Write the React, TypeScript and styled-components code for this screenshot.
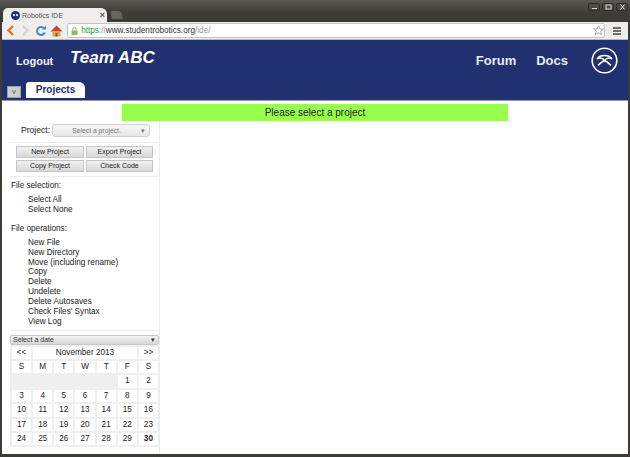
import styled, { createGlobalStyle } from "styled-components";

const GlobalStyle = createGlobalStyle`
  html, body { margin: 0; padding: 0; height: 100%; overflow: hidden; background: #fff; }
  body { font-family: "Liberation Sans", Arial, sans-serif; }
`;

const Window = styled.div`
  width: 630px;
  height: 457px;
  box-sizing: border-box;
  display: flex;
  flex-direction: column;
  background: #3c3b37;
  padding: 0 2px 3px;
  overflow: hidden;
`;

const TitleBar = styled.div`
  height: 22px;
  flex: none;
  display: flex;
  align-items: flex-end;
  padding-left: 3px;
  background: linear-gradient(#5a5852, #3c3b37 60%);
  margin: 0 -2px;
`;

const Tab = styled.div`
  width: 104px;
  height: 14px;
  box-sizing: border-box;
  background: #efeeec;
  border-radius: 5px 6px 0 0;
  display: flex;
  align-items: center;
  padding: 0 2px 0 8px;
  gap: 2px;
  font-size: 7px;
  color: #555;
`;

const TabLabel = styled.span`
  flex: 1;
  white-space: nowrap;
`;

const TabClose = styled.span`
  font-size: 9px;
  font-weight: 700;
  color: #555;
`;

const NewTab = styled.div`
  width: 11px;
  height: 8px;
  margin: 0 0 3px 4px;
  background: #66655f;
  border-radius: 2px 3px 0 0;
  transform: skewX(12deg);
`;

const WindowButtons = styled.div`
  margin: 0 2px auto auto;
  padding-top: 3px;
  display: flex;
  gap: 2px;
`;

const WindowButton = styled.div`
  width: 10px;
  height: 6px;
  border: 1px solid #2e2d2a;
  border-radius: 2px;
  background: #4c4b46;
  color: #d8d6d0;
  display: flex;
  align-items: center;
  justify-content: center;
  svg { display: block; }
`;

const Toolbar = styled.div`
  height: 18px;
  flex: none;
  box-sizing: border-box;
  display: flex;
  align-items: center;
  background: #efeeec;
  border-bottom: 1px solid #b8b8b6;
  padding: 0 3px 0 1px;
`;

const NavIcon = styled.div`
  width: 15.3px;
  height: 14px;
  flex: none;
  display: flex;
  align-items: center;
  justify-content: center;
`;

const Omnibox = styled.div`
  flex: 1;
  height: 15px;
  box-sizing: border-box;
  margin-left: 3px;
  background: #fff;
  border: 1px solid #c4c4c2;
  border-radius: 2px;
  display: flex;
  align-items: center;
  padding: 0 0 0 3px;
  font-size: 8.2px;
  white-space: nowrap;
`;

const Https = styled.span`
  color: #1f9c32;
  margin-left: 3px;
`;

const UrlDim = styled.span`
  color: #9a9a9a;
`;

const UrlHost = styled.span`
  color: #333;
`;

const StarSlot = styled.div`
  margin-left: auto;
  display: flex;
`;

const MenuSlot = styled.div`
  width: 17px;
  margin-left: 3px;
  display: flex;
  justify-content: center;
`;

const Page = styled.div`
  flex: 1;
  min-height: 0;
  background: #fff;
  display: flex;
  flex-direction: column;
`;

const Header = styled.header`
  height: 61px;
  flex: none;
  box-sizing: border-box;
  background: #21316f;
  border-bottom: 1px solid #8e97b8;
  display: flex;
  flex-direction: column;
`;

const HeaderTop = styled.div`
  height: 41px;
  display: flex;
  align-items: center;
  padding: 0 10px 0 14px;
  color: #fff;
`;

const Logout = styled.span`
  font-size: 11px;
  font-weight: 700;
  width: 54px;
  color: #f4f5fa;
`;

const TeamName = styled.span`
  font-size: 17px;
  font-weight: 700;
  font-style: italic;
  margin-top: -5px;
`;

const HeaderLink = styled.span<{ $gap: number }>`
  font-size: 13px;
  font-weight: 700;
  color: #e8ebf5;
  margin-left: ${(p) => p.$gap}px;
`;

const LogoSlot = styled.div`
  margin-left: 23px;
  display: flex;
`;

const Spacer = styled.div`
  flex: 1;
`;

const TabRow = styled.div`
  flex: 1;
  display: flex;
  align-items: flex-end;
  padding: 0 0 2px 5px;
`;

const ToggleButton = styled.div`
  width: 14px;
  height: 12px;
  box-sizing: border-box;
  background: #cfcfd0;
  border: 1px solid #9a9eae;
  color: #555;
  font-size: 8px;
  line-height: 10px;
  text-align: center;
`;

const ProjectsTab = styled.div`
  width: 59px;
  height: 16px;
  margin-left: 5px;
  background: #fff;
  border-radius: 3px 6px 0 0;
  color: #21316f;
  font-size: 10px;
  font-weight: 700;
  line-height: 16px;
  text-align: center;
`;

const Message = styled.div`
  flex: none;
  width: 386px;
  height: 17px;
  margin: 3px 0 0 120px;
  background: #99ff4d;
  color: #222;
  font-size: 10px;
  line-height: 17px;
  text-align: center;
`;

const Sidebar = styled.aside`
  width: 149px;
  margin-left: 8px;
  flex: 1;
  min-height: 0;
  display: flex;
  flex-direction: column;
  color: #222;
  border-right: 1px solid #ececec;
`;

const Section = styled.div`
  border-bottom: 1px solid #ececec;
`;

const ProjectRow = styled(Section)`
  height: 18px;
  padding: 3px 0 0 11px;
  display: flex;
  align-items: flex-start;
  font-size: 8.6px;
  line-height: 12px;
  gap: 2px;
`;

const ProjectSelect = styled.div`
  width: 98px;
  height: 13px;
  box-sizing: border-box;
  border: 1px solid #d0d0d0;
  border-radius: 3px;
  background: linear-gradient(#f8f8f8, #e6e6e6);
  color: #777;
  font-size: 6.8px;
  line-height: 11px;
  padding: 0 4px 0 19px;
  display: flex;
  justify-content: space-between;
`;

const ButtonGrid = styled(Section)`
  display: grid;
  grid-template-columns: 68px 67px;
  gap: 2px;
  padding: 3px 0 4px 6px;
`;

const ActionButton = styled.div`
  height: 12px;
  box-sizing: border-box;
  border: 1px solid #c6c6c6;
  background: linear-gradient(#f1f1f1, #d8d8d8);
  font-size: 7px;
  line-height: 10px;
  text-align: center;
  color: #222;
`;

const FileSection = styled(Section)`
  padding: 4px 0 3px;
`;

const GroupTitle = styled.div`
  font-size: 8.2px;
  line-height: 10px;
  margin-bottom: 4px;
  padding-left: 1px;
`;

const ActionList = styled.ul`
  list-style: none;
  margin: 0 0 9px;
  padding: 0 0 0 18px;
  font-size: 8.2px;
  line-height: 9.875px;

  &:last-child {
    margin-bottom: 0;
  }
`;

const DateSelect = styled.div`
  height: 10px;
  margin-top: 4px;
  flex: none;
  box-sizing: border-box;
  border: 1px solid #c8c8c8;
  border-radius: 2px;
  background: linear-gradient(#f2f2f2, #d6d6d6);
  font-size: 7px;
  line-height: 8px;
  padding: 0 3px 0 2px;
  display: flex;
  justify-content: space-between;
  color: #333;
`;

const Calendar = styled.div`
  display: grid;
  grid-template-columns: repeat(7, 1fr);
  grid-auto-rows: 12.4px;
  gap: 2px;
  padding: 2px 1px 2px 2px;
  background: #efefef;
  font-size: 8.2px;
  line-height: 12.4px;
  text-align: center;
  color: #222;
`;

const Cell = styled.div<{ $bold?: boolean }>`
  background: #fff;
  font-weight: ${(p) => (p.$bold ? 700 : 400)};
`;

const MonthTitle = styled(Cell)`
  grid-column: span 5;
`;

const BlankCells = styled.div`
  grid-column: span 5;
`;

const Globe = () => (
  <svg width="9" height="9" viewBox="0 0 10 10">
    <circle cx="5" cy="5" r="5" fill="#21316f" />
    <circle cx="3.3" cy="4.5" r="1.3" fill="#dfe3f0" />
    <circle cx="6.7" cy="4.5" r="1.3" fill="#dfe3f0" />
  </svg>
);

const Logo = () => (
  <svg width="27" height="27" viewBox="0 0 27 27" fill="none" stroke="#fff" strokeWidth="1.5" strokeLinecap="round">
    <circle cx="13.5" cy="13.5" r="12.3" strokeWidth="1.6" />
    <path d="M6.5 11.5C9 7.5 18 7.5 20.5 11.5" />
    <path d="M6.5 11.5C9.5 10.5 12 11.5 13.5 13.5C15 11.5 17.5 10.5 20.5 11.5" />
    <path d="M7.5 18C9.5 15.5 11.5 14.5 13.5 13.5C15.5 14.5 17.5 15.5 19.5 18" />
  </svg>
);

const FILE_OPS = [
  "New File",
  "New Directory",
  "Move (including rename)",
  "Copy",
  "Delete",
  "Undelete",
  "Delete Autosaves",
  "Check Files' Syntax",
  "View Log",
];

const WEEKDAYS = ["S", "M", "T", "W", "T", "F", "S"];
const DAYS = Array.from({ length: 30 }, (_, i) => i + 1);

export default function App() {
  return (
    <>
      <GlobalStyle />
      <Window>
        <TitleBar>
          <Tab>
            <Globe />
            <TabLabel>Robotics IDE</TabLabel>
            <TabClose>×</TabClose>
          </Tab>
          <NewTab />
          <WindowButtons>
            <WindowButton>
              <svg width="7" height="6" viewBox="0 0 7 6"><path d="M1 4.5H6" stroke="currentColor" /></svg>
            </WindowButton>
            <WindowButton>
              <svg width="7" height="6" viewBox="0 0 7 6"><rect x="1" y="1" width="5" height="4" fill="none" stroke="currentColor" /></svg>
            </WindowButton>
            <WindowButton>
              <svg width="7" height="6" viewBox="0 0 7 6"><path d="M1.5 .5L5.5 5.5M5.5 .5L1.5 5.5" stroke="currentColor" /></svg>
            </WindowButton>
          </WindowButtons>
        </TitleBar>
        <Toolbar>
          <NavIcon>
            <svg width="9" height="11" viewBox="0 0 9 11"><path d="M7 1L2.5 5.5L7 10" fill="none" stroke="#d9772a" strokeWidth="2.4" /></svg>
          </NavIcon>
          <NavIcon>
            <svg width="9" height="11" viewBox="0 0 9 11"><path d="M2 1L6.5 5.5L2 10" fill="none" stroke="#d4d4d2" strokeWidth="2.4" /></svg>
          </NavIcon>
          <NavIcon>
            <svg width="12" height="12" viewBox="0 0 12 12">
              <path d="M9.8 7.5A4 4 0 1 1 9 3.2" fill="none" stroke="#4a86c5" strokeWidth="2" />
              <path d="M7 4.6H11V.8Z" fill="#4a86c5" />
            </svg>
          </NavIcon>
          <NavIcon>
            <svg width="13" height="12" viewBox="0 0 13 12">
              <path d="M6.5 .5L.5 6.5H12.5Z" fill="#c9443a" />
              <rect x="2.5" y="6" width="8" height="5.5" fill="#e3a35e" />
              <rect x="5.5" y="8" width="2" height="3.5" fill="#8a5a2c" />
            </svg>
          </NavIcon>
          <Omnibox>
            <svg width="7" height="10" viewBox="0 0 8 10">
              <path d="M2 4.5V3a2 2 0 0 1 4 0v1.5" fill="none" stroke="#7f9f5f" />
              <rect x=".5" y="4.5" width="7" height="5" rx="1" fill="#8fb765" />
            </svg>
            <Https>https</Https>
            <UrlDim>://</UrlDim>
            <UrlHost>www.studentrobotics.org</UrlHost>
            <UrlDim>/ide/</UrlDim>
            <StarSlot>
              <svg width="11" height="11" viewBox="0 0 11 11"><path d="M5.5 .8L7 4H10.4L7.7 6.2L8.7 9.8L5.5 7.7L2.3 9.8L3.3 6.2L.6 4H4Z" fill="#fff" stroke="#a8a8a8" /></svg>
            </StarSlot>
          </Omnibox>
          <MenuSlot>
            <svg width="8" height="8" viewBox="0 0 8 8"><path d="M0 1H8M0 4H8M0 7H8" stroke="#444" strokeWidth="1.5" /></svg>
          </MenuSlot>
        </Toolbar>
        <Page>
          <Header>
            <HeaderTop>
              <Logout>Logout</Logout>
              <TeamName>Team ABC</TeamName>
              <Spacer />
              <HeaderLink $gap={0}>Forum</HeaderLink>
              <HeaderLink $gap={20}>Docs</HeaderLink>
              <LogoSlot><Logo /></LogoSlot>
            </HeaderTop>
            <TabRow>
              <ToggleButton>v</ToggleButton>
              <ProjectsTab>Projects</ProjectsTab>
            </TabRow>
          </Header>
          <Message>Please select a project</Message>
          <Sidebar>
            <ProjectRow>
              <span>Project:</span>
              <ProjectSelect>
                <span>Select a project.</span>
                <span>▾</span>
              </ProjectSelect>
            </ProjectRow>
            <ButtonGrid>
              <ActionButton>New Project</ActionButton>
              <ActionButton>Export Project</ActionButton>
              <ActionButton>Copy Project</ActionButton>
              <ActionButton>Check Code</ActionButton>
            </ButtonGrid>
            <FileSection>
              <GroupTitle>File selection:</GroupTitle>
              <ActionList>
                <li>Select All</li>
                <li>Select None</li>
              </ActionList>
              <GroupTitle>File operations:</GroupTitle>
              <ActionList>
                {FILE_OPS.map((op) => (
                  <li key={op}>{op}</li>
                ))}
              </ActionList>
            </FileSection>
            <DateSelect>
              <span>Select a date</span>
              <span>▾</span>
            </DateSelect>
            <Calendar>
              <Cell>&lt;&lt;</Cell>
              <MonthTitle>November 2013</MonthTitle>
              <Cell>&gt;&gt;</Cell>
              {WEEKDAYS.map((d, i) => (
                <Cell key={i}>{d}</Cell>
              ))}
              <BlankCells />
              {DAYS.map((d) => (
                <Cell key={d} $bold={d === 30}>{d}</Cell>
              ))}
            </Calendar>
          </Sidebar>
        </Page>
      </Window>
    </>
  );
}
